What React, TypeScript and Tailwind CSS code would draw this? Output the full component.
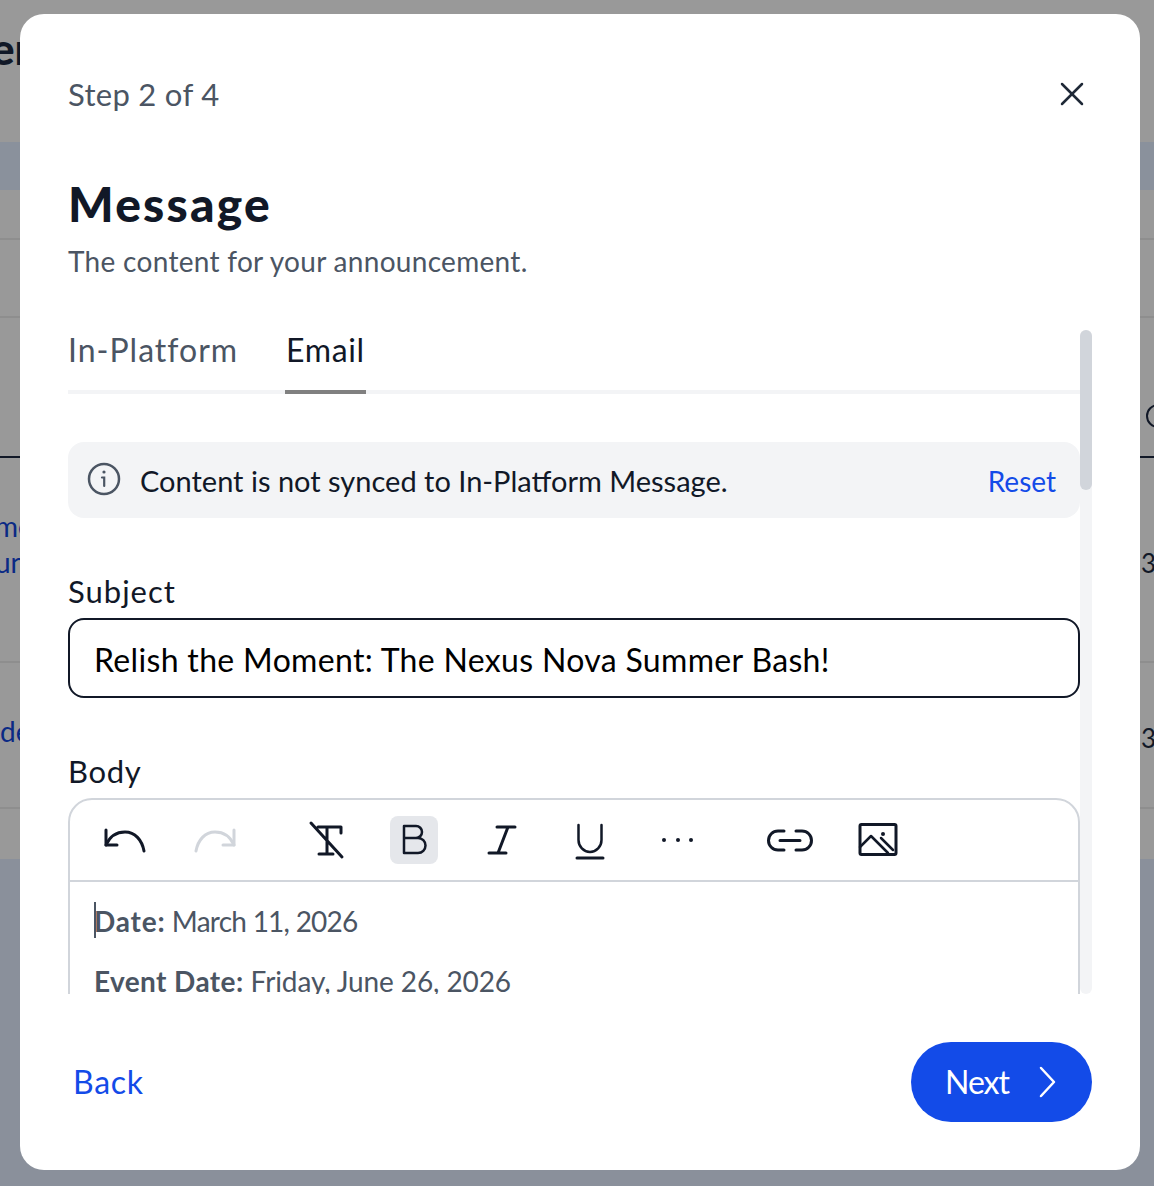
import { X } from "lucide-react";

function ToolButton({ active, children, className }: { active?: boolean; children: React.ReactNode; className?: string }) {
  return (
    <div className={`flex h-12 w-12 shrink-0 items-center justify-center rounded-lg ${active ? "bg-[#e5e7eb]" : ""} ${className ?? ""}`}>
      <svg width="48" height="48" viewBox="0 0 48 48" fill="none" strokeLinecap="round" strokeLinejoin="round">
        {children}
      </svg>
    </div>
  );
}

function Backdrop() {
  return (
    <div className="flex h-[1186px] w-[1154px] flex-col overflow-hidden bg-[#999999] font-['Lato',sans-serif]">
      <div className="h-[142px] shrink-0 pt-[22px] text-[44px] font-black leading-[52px] text-[#111827] -indent-[9px]">er</div>
      <div className="h-[48px] shrink-0 bg-[#8a919c]" />
      <div className="h-[50px] shrink-0 border-b-2 border-[#8e8e8e]" />
      <div className="h-[78px] shrink-0 border-b-2 border-[#8e8e8e]" />
      <div className="flex h-[140px] shrink-0 items-end justify-end border-b-2 border-[#111827] pb-[28px]">
        <div className="mr-[-16px] h-6 w-6 rounded-full border-2 border-[#111827]" />
      </div>
      <div className="flex h-[205px] shrink-0 items-start justify-between border-b-2 border-[#8e8e8e] pt-[50px]">
        <div className="-ml-[5px] text-[28px] leading-[36px] text-[#0b2a85]">
          <div>me</div>
          <div>un</div>
        </div>
        <div className="-mr-[2px] pt-[37px] text-[26px] leading-[36px] text-[#111827]">3</div>
      </div>
      <div className="flex h-[146px] shrink-0 items-start justify-between border-b-2 border-[#8e8e8e] pt-[50px]">
        <div className="text-[28px] leading-[36px] text-[#0b2a85]">de</div>
        <div className="-mr-[2px] pt-[7px] text-[26px] leading-[36px] text-[#111827]">3</div>
      </div>
      <div className="h-[50px] shrink-0" />
      <div className="flex-1 bg-[#8a909b]" />
    </div>
  );
}

export default function App() {
  return (
    <div className="relative h-[1186px] w-[1154px] overflow-hidden font-['Lato',sans-serif]">
      <Backdrop />
      <div className="absolute left-[20px] top-[14px] flex h-[1156px] w-[1120px] flex-col rounded-[24px] bg-white px-[48px]">
        <div className="mt-[60px] flex h-10 items-center justify-between">
          <div className="text-[31px] leading-10 tracking-[0.3px] text-[#4b5563]">Step 2 of 4</div>
          <X className="h-[40px] w-[40px] text-[#1f2937]" strokeWidth={1.5} />
        </div>
        <h1 className="mt-[62px] text-[48px] font-black leading-[56px] tracking-[2.2px] text-[#111827]">Message</h1>
        <p className="mt-[11px] text-[28px] leading-9 tracking-[0.3px] text-[#4b5563]">The content for your announcement.</p>

        <div className="relative mt-[51px] h-[664px] w-[1024px] shrink-0 overflow-hidden">
          <div className="absolute right-0 top-0 h-full w-3 rounded-full bg-[#f3f4f6]">
            <div className="h-[160px] w-3 rounded-full bg-[#d1d5db]" />
          </div>
          <div className="w-[1012px]">
            <div className="flex h-16 gap-[47px] border-b-4 border-[#f3f4f6]">
              <div className="h-16 text-[32px] leading-10 tracking-[1px] text-[#4b5563]">In-Platform</div>
              <div className="h-16 border-b-4 border-[#808080] px-[1px] text-[32px] leading-10 tracking-[0.6px] text-[#111827]">Email</div>
            </div>

            <div className="mt-[48px] flex h-[76px] items-center rounded-2xl bg-[#f3f4f6] pl-[18px] pr-[24px]">
              <svg width="36" height="36" viewBox="0 0 36 36" fill="none" className="mb-[3px] shrink-0" strokeLinecap="round">
                <circle cx="18" cy="18" r="15" stroke="#4b5563" strokeWidth="2.5" />
                <path d="M16 16.5h2.2V25" stroke="#4b5563" strokeWidth="2.2" />
                <circle cx="18" cy="11" r="1.6" fill="#4b5563" />
              </svg>
              <span className="ml-[18px] pt-[2px] text-[29px] text-[#111827]">Content is not synced to In-Platform Message.</span>
              <span className="ml-auto pt-[2px] text-[28px] text-[#134be8]">Reset</span>
            </div>

            <div className="mt-[55px] text-[31px] leading-9 tracking-[1px] text-[#111827]">Subject</div>
            <div className="mt-[9px] flex h-20 items-center rounded-2xl border-2 border-[#111827] pl-[24px] pt-[3px] text-[32px] tracking-[0.33px] text-black">
              Relish the Moment: The Nexus Nova Summer Bash!
            </div>

            <div className="mt-[55px] text-[31px] leading-9 tracking-[0.7px] text-[#111827]">Body</div>
            <div className="mt-[9px] h-[300px] rounded-t-[24px] border-2 border-[#d1d5db]">
              <div className="flex h-[82px] items-center border-b-2 border-[#d1d5db] pl-[31px]">
                <ToolButton>
                  <g stroke="#111827" strokeWidth="3">
                    <path d="M5 14v15h11" />
                    <path d="M5 29C9 20 16 16 24 16c10 0 17 8 19 19" />
                  </g>
                </ToolButton>
                <ToolButton className="ml-[42px]">
                  <g stroke="#d1d5db" strokeWidth="3">
                    <path d="M43 14v15H32" />
                    <path d="M43 29C39 20 32 16 24 16 14 16 7 24 5 35" />
                  </g>
                </ToolButton>
                <ToolButton className="ml-[63px]">
                  <g stroke="#111827" strokeWidth="3">
                    <path d="M16 11h23v6M25 11v27M17 38h14M9 7l31 34" />
                  </g>
                </ToolButton>
                <ToolButton active className="ml-[40px]">
                  <path d="M14 10v27h14a7.5 7.5 0 0 0 0-15H14M14 22h12a6 6 0 0 0 0-12H14" stroke="#111827" strokeWidth="2.5" />
                </ToolButton>
                <ToolButton className="ml-[40px]">
                  <path d="M19 11h18M11 37h17M30 11 20 37" stroke="#111827" strokeWidth="3" />
                </ToolButton>
                <ToolButton className="ml-[40px]">
                  <path d="M12.5 9v15a11.5 12 0 0 0 23 0V9" stroke="#111827" strokeWidth="2.5" />
                  <path d="M11 42h26" stroke="#111827" strokeWidth="3" />
                </ToolButton>
                <ToolButton className="ml-[40px]">
                  <circle cx="10" cy="24" r="2" fill="#111827" />
                  <circle cx="24" cy="24" r="2" fill="#111827" />
                  <circle cx="37" cy="24" r="2" fill="#111827" />
                </ToolButton>
                <ToolButton className="ml-[64px]">
                  <path d="M18 15h-6a9.5 9.5 0 0 0 0 19h6M30 15h6a9.5 9.5 0 0 1 0 19h-6M14 24.5h20" stroke="#111827" strokeWidth="3" />
                </ToolButton>
                <ToolButton className="ml-[40px]">
                  <rect x="6" y="8.5" width="36" height="30" rx="1.5" stroke="#111827" strokeWidth="3" />
                  <path d="M6 31l11-11 17 17M27 22l12 12" stroke="#111827" strokeWidth="2.5" />
                  <circle cx="29" cy="18" r="2" fill="#111827" />
                </ToolButton>
              </div>
              <div className="relative pl-[24px] pt-[21px] text-[28px] leading-9 text-[#4b5563]">
                <div className="absolute left-[24px] top-[20px] h-[36px] w-[2px] bg-[#4b5563]" />
                <p className="tracking-[-0.75px]"><strong className="font-bold tracking-[0.8px]">Date:</strong> March 11, 2026</p>
                <p className="mt-6 tracking-[-0.1px]"><strong className="font-bold tracking-[0.4px]">Event Date:</strong> Friday, June 26, 2026</p>
              </div>
            </div>
          </div>
        </div>

        <div className="mt-[48px] flex items-center justify-between pl-[5px]">
          <span className="text-[32px] tracking-[0.7px] text-[#134be8]">Back</span>
          <div className="flex h-20 w-[181px] items-center rounded-full bg-[#134be8] pl-[34px] text-[32px] tracking-[-1px] text-white">
            <span>Next</span>
            <svg width="18" height="32" viewBox="0 0 18 32" fill="none" className="ml-[30px]" strokeLinecap="round" strokeLinejoin="round">
              <path d="M2 2l13 14L2 30" stroke="white" strokeWidth="2.5" />
            </svg>
          </div>
        </div>
      </div>
    </div>
  );
}
